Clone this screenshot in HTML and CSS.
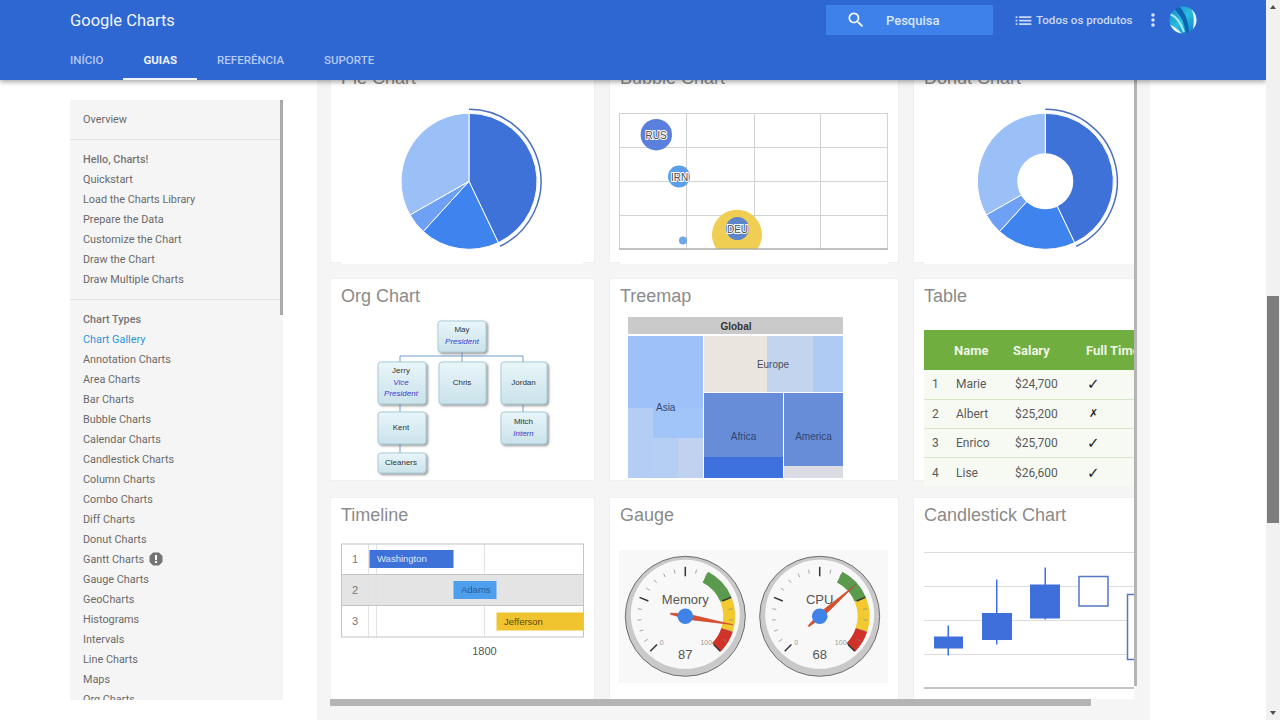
FILE: index.html
```html
<!DOCTYPE html>
<html lang="pt">
<head>
<meta charset="utf-8">
<title>Google Charts</title>
<link rel="stylesheet" href="styles.css">
</head>
<body>
<div class="page">
  <header class="topbar">
    <div class="topbar-row">
      <div class="brand">Google Charts</div>
      <div class="search">
        <svg class="search-icon" width="20" height="20" viewBox="0 0 24 24"><path fill="#fff" d="M15.5 14h-.79l-.28-.27A6.47 6.47 0 0 0 16 9.5 6.5 6.5 0 1 0 9.5 16c1.61 0 3.09-.59 4.23-1.57l.27.28v.79l5 4.99L20.49 19l-4.99-5zm-6 0C7.01 14 5 11.99 5 9.5S7.01 5 9.5 5 14 7.01 14 9.5 11.99 14 9.5 14z"/></svg>
        <span>Pesquisa</span>
      </div>
      <div class="products">
        <svg width="21" height="21" viewBox="0 0 24 24"><path fill="#c9d9f6" d="M3 13h2v-2H3v2zm0 4h2v-2H3v2zm0-8h2V7H3v2zm4 4h14v-2H7v2zm0 4h14v-2H7v2zM7 7v2h14V7H7z"/></svg>
        <span>Todos os produtos</span>
      </div>
      <svg class="kebab" width="6" height="16" viewBox="0 0 6 16"><circle cx="3" cy="3" r="1.8" fill="#d5e1f8"/><circle cx="3" cy="8" r="1.8" fill="#d5e1f8"/><circle cx="3" cy="13" r="1.8" fill="#d5e1f8"/></svg>
      <svg class="avatar" width="28" height="28" viewBox="0 0 28 28">
        <defs>
          <clipPath id="av"><circle cx="14" cy="14" r="13.5"/></clipPath>
          <linearGradient id="avg" x1="0" y1="0" x2="1" y2="1"><stop offset="0" stop-color="#1b7fd0"/><stop offset=".5" stop-color="#28bfe0"/><stop offset="1" stop-color="#0f6fc0"/></linearGradient>
        </defs>
        <g clip-path="url(#av)">
          <rect width="28" height="28" fill="url(#avg)"/>
          <path d="M0 18 C6 21 10 24 13 28 L0 28Z" fill="#eef8fb"/>
          <path d="M21 0 C25 7 26 15 23 28 L28 28 L28 0Z" fill="#e6f4f8"/>
          <path d="M10 0 C16 7 20 15 20 28 L17 28 C16 17 11 8 5 3Z" fill="#0d62b4"/>
          <path d="M1 8 C8 11 12 17 15 26" stroke="#a5e8f4" stroke-width="2" fill="none"/>
        </g>
      </svg>
    </div>
    <nav class="tabs">
      <a class="tab">INÍCIO</a>
      <a class="tab tab-active">GUIAS</a>
      <a class="tab">REFERÊNCIA</a>
      <a class="tab">SUPORTE</a>
    </nav>
  </header>

  <main class="layout">
    <aside class="sidenav">
      <div class="nav-thumb"></div>
      <ul class="nav-group">
        <li>Overview</li>
      </ul>
      <ul class="nav-group">
        <li class="nav-head">Hello, Charts!</li>
        <li>Quickstart</li>
        <li>Load the Charts Library</li>
        <li>Prepare the Data</li>
        <li>Customize the Chart</li>
        <li>Draw the Chart</li>
        <li>Draw Multiple Charts</li>
      </ul>
      <ul class="nav-group">
        <li class="nav-head">Chart Types</li>
        <li class="nav-active">Chart Gallery</li>
        <li>Annotation Charts</li>
        <li>Area Charts</li>
        <li>Bar Charts</li>
        <li>Bubble Charts</li>
        <li>Calendar Charts</li>
        <li>Candlestick Charts</li>
        <li>Column Charts</li>
        <li>Combo Charts</li>
        <li>Diff Charts</li>
        <li>Donut Charts</li>
        <li class="nav-badge"><span>Gantt Charts</span>
          <svg width="14" height="14" viewBox="0 0 14 14"><polygon points="4,0.5 10,0.5 13.5,4 13.5,10 10,13.5 4,13.5 0.5,10 0.5,4" fill="#757575"/><rect x="6" y="3" width="2" height="5" fill="#fff"/><rect x="6" y="9" width="2" height="2" fill="#fff"/></svg>
        </li>
        <li>Gauge Charts</li>
        <li>GeoCharts</li>
        <li>Histograms</li>
        <li>Intervals</li>
        <li>Line Charts</li>
        <li>Maps</li>
        <li>Org Charts</li>
      </ul>
    </aside>

    <section class="gutter">
      <div class="viewer">
        <div class="gallery">

          <article class="card">
            <h3 class="card-title">Pie Chart</h3>
            <svg class="chart chart-a" viewBox="331 100 263 163">
              <defs>
                <g id="pie" stroke="#fff" stroke-width="1">
                  <path fill="#3f72d9" d="M0 0L0 -68A68 68 0 0 1 29.3 61.4Z"/>
                  <path fill="#3f83ee" d="M0 0L29.3 61.4A68 68 0 0 1 -45.8 50.2Z"/>
                  <path fill="#6ea0f5" d="M0 0L-45.8 50.2A68 68 0 0 1 -59 33.6Z"/>
                  <path fill="#9bbff7" d="M0 0L-59 33.6A68 68 0 0 1 0 -68Z"/>
                  <path fill="none" stroke="#4a6fc0" stroke-width="1.5" d="M0 -72A72 72 0 0 1 31 65"/>
                </g>
              </defs>
              <rect x="342" y="258" width="241" height="6" fill="#fff"/>
              <use href="#pie" transform="translate(469 181.3)"/>
            </svg>
          </article>

          <article class="card">
            <h3 class="card-title">Bubble Chart</h3>
            <svg class="chart chart-b" viewBox="610 100 288 163">
              <rect x="620" y="258" width="268" height="6" fill="#fff"/>
              <g class="grid">
                <rect x="619.5" y="113.5" width="268" height="135.5" fill="#fff"/>
                <line x1="686.5" y1="113" x2="686.5" y2="249"/>
                <line x1="754.5" y1="113" x2="754.5" y2="249"/>
                <line x1="820.5" y1="113" x2="820.5" y2="249"/>
                <line x1="619" y1="147.5" x2="888" y2="147.5"/>
                <line x1="619" y1="181.5" x2="888" y2="181.5"/>
                <line x1="619" y1="215.5" x2="888" y2="215.5"/>
              </g>
              <circle cx="656.3" cy="134.7" r="15.7" fill="#5b7fdc"/>
              <circle cx="679" cy="176.5" r="11" fill="#5a9fe8"/>
              <circle cx="683" cy="240.5" r="4" fill="#6fa8e8"/>
              <path d="M716.5 249A25 25 0 1 1 757.5 249Z" fill="#f0ce54"/>
              <circle cx="737.5" cy="228.5" r="11.5" fill="#5d85cc"/>
              <line x1="619" y1="249" x2="888" y2="249" stroke="#999" stroke-width="1"/>
              <text class="bubble-label" x="656" y="138.5">RUS</text>
              <text class="bubble-label" x="679.5" y="180.5">IRN</text>
              <text class="bubble-label" x="737.5" y="232.5">DEU</text>
            </svg>
          </article>

          <article class="card">
            <h3 class="card-title">Donut Chart</h3>
            <svg class="chart chart-c" viewBox="914 100 240 163">
              <rect x="924" y="258" width="230" height="6" fill="#fff"/>
              <use href="#pie" transform="translate(1045.3 181.3)"/>
              <circle cx="1045.3" cy="181.3" r="28" fill="#fff"/>
            </svg>
          </article>

          <article class="card">
            <h3 class="card-title">Org Chart</h3>
            <svg class="chart chart-a" viewBox="331 318 263 163">
              <defs>
                <linearGradient id="node" x1="0" y1="0" x2="0" y2="1"><stop offset="0" stop-color="#e9f6fa"/><stop offset="1" stop-color="#cae2ea"/></linearGradient>
                <filter id="nodeShadow" x="-10%" y="-10%" width="125%" height="130%"><feDropShadow dx="1.5" dy="1.5" stdDeviation="0.8" flood-color="#666" flood-opacity=".7"/></filter>
              </defs>
              <g class="org-link">
                <path d="M400 362V356H523V362M462 352V362M400 404V412M400 444V453M523 404V412"/>
              </g>
              <g class="org-node">
                <rect x="438" y="321" width="48" height="31" rx="3"/>
                <rect x="378" y="362" width="48" height="42" rx="3"/>
                <rect x="439" y="362" width="47" height="42" rx="3"/>
                <rect x="501" y="362" width="46" height="42" rx="3"/>
                <rect x="378" y="412" width="48" height="32" rx="3"/>
                <rect x="501" y="412" width="46" height="32" rx="3"/>
                <rect x="378" y="453" width="48" height="20" rx="3"/>
              </g>
              <g class="org-text">
                <text x="462" y="332">May</text>
                <text class="org-role" x="462" y="344">President</text>
                <text x="401" y="373">Jerry</text>
                <text class="org-role" x="401" y="385">Vice</text>
                <text class="org-role" x="401" y="396">President</text>
                <text x="462" y="385">Chris</text>
                <text x="523.5" y="385">Jordan</text>
                <text x="401" y="430">Kent</text>
                <text x="523.5" y="424">Mitch</text>
                <text class="org-role" x="523.5" y="436">Intern</text>
                <text x="401" y="464.5">Cleaners</text>
              </g>
            </svg>
          </article>

          <article class="card">
            <h3 class="card-title">Treemap</h3>
            <svg class="chart chart-b" viewBox="610 318 288 163">
              <rect x="628" y="317" width="215" height="17" fill="#cacaca"/>
              <rect x="628" y="336" width="75" height="72" fill="#9dc1f8"/>
              <rect x="628" y="408" width="25" height="70" fill="#b3cdf5"/>
              <rect x="653" y="408" width="50" height="30" fill="#a1c5f9"/>
              <rect x="653" y="438" width="25" height="40" fill="#b4cef4"/>
              <rect x="678" y="438" width="25" height="40" fill="#c0d2f0"/>
              <rect x="704" y="336" width="63" height="56" fill="#ebe6dd"/>
              <rect x="767" y="336" width="46" height="56" fill="#c3d4ee"/>
              <rect x="813" y="336" width="30" height="56" fill="#b0cbf3"/>
              <rect x="704" y="393" width="79" height="64" fill="#678dd8"/>
              <rect x="704" y="457" width="79" height="21" fill="#3f71de"/>
              <rect x="784" y="393" width="59" height="73" fill="#678dd8"/>
              <rect x="784" y="466" width="59" height="12" fill="#dbdbe3"/>
              <text class="tm-head" x="736" y="329.5">Global</text>
              <text class="tm-dark" x="665.7" y="411">Asia</text>
              <text class="tm-grey" x="773" y="367.5">Europe</text>
              <text class="tm-dark" x="743.5" y="439.5">Africa</text>
              <text class="tm-dark" x="813.5" y="439.5">America</text>
            </svg>
          </article>

          <article class="card card-table">
            <h3 class="card-title">Table</h3>
            <table class="data">
              <thead>
                <tr><th class="col-n"></th><th class="col-name">Name</th><th class="col-sal">Salary</th><th>Full Time</th></tr>
              </thead>
              <tbody>
                <tr><td>1</td><td>Marie</td><td>$24,700</td><td class="mark">✓</td></tr>
                <tr><td>2</td><td>Albert</td><td>$25,200</td><td class="mark mark-no">✗</td></tr>
                <tr><td>3</td><td>Enrico</td><td>$25,700</td><td class="mark">✓</td></tr>
                <tr><td>4</td><td>Lise</td><td>$26,600</td><td class="mark">✓</td></tr>
              </tbody>
            </table>
          </article>

          <article class="card">
            <h3 class="card-title">Timeline</h3>
            <svg class="chart chart-a" viewBox="331 537 263 163">
              <rect x="342" y="544" width="241" height="93" fill="#fff"/>
              <rect x="342" y="574.5" width="241" height="31" fill="#e4e4e4"/>
              <g class="tl-grid">
                <line x1="368.5" y1="544" x2="368.5" y2="637"/>
                <line x1="376.5" y1="544" x2="376.5" y2="637"/>
                <line x1="484.5" y1="544" x2="484.5" y2="637"/>
              </g>
              <rect x="341.5" y="544" width="242" height="93" fill="none" stroke="#c4c4c4"/>
              <line x1="342" y1="574.5" x2="583" y2="574.5" stroke="#c4c4c4"/>
              <line x1="342" y1="605.5" x2="583" y2="605.5" stroke="#c4c4c4"/>
              <rect x="369.5" y="550" width="84" height="18" fill="#3f72d9"/>
              <rect x="453.5" y="581" width="43" height="18" fill="#4d9fee"/>
              <rect x="496.5" y="612.5" width="86.5" height="18" fill="#f0c42f"/>
              <text class="tl-num" x="355" y="563">1</text>
              <text class="tl-num" x="355" y="594">2</text>
              <text class="tl-num" x="355" y="625">3</text>
              <text class="tl-bar tl-white" x="377" y="561.5">Washington</text>
              <text class="tl-bar tl-blue" x="461" y="592.5">Adams</text>
              <text class="tl-bar tl-brown" x="504" y="624.5">Jefferson</text>
              <text class="tl-axis" x="484.5" y="654.5">1800</text>
            </svg>
          </article>

          <article class="card">
            <h3 class="card-title">Gauge</h3>
            <svg class="chart chart-b" viewBox="610 537 288 163">
              <defs>
                <g id="gaugeBase">
                  <circle r="60" fill="#c9c9c9" stroke="#6e6e6e" stroke-width="1"/>
                  <circle cy="-2" r="54.5" fill="#f8f8f8"/>
                  <g fill="none" stroke-width="12">
                    <path stroke="#5a9a4c" d="M20 -39.2A44 44 0 0 1 40.65 -16.8"/>
                    <path stroke="#f2c92e" d="M40.65 -16.8A44 44 0 0 1 41.8 13.6"/>
                    <path stroke="#cf3227" d="M41.8 13.6A44 44 0 0 1 31.1 31.1"/>
                  </g>
                  <g class="tick-minor">
                    <line y1="-48" y2="-44" transform="rotate(-121.5)"/><line y1="-48" y2="-44" transform="rotate(-108)"/>
                    <line y1="-48" y2="-44" transform="rotate(-94.5)"/><line y1="-48" y2="-44" transform="rotate(-81)"/>
                    <line y1="-48" y2="-44" transform="rotate(-54)"/><line y1="-48" y2="-44" transform="rotate(-40.5)"/>
                    <line y1="-48" y2="-44" transform="rotate(-27)"/><line y1="-48" y2="-44" transform="rotate(-13.5)"/>
                    <line y1="-48" y2="-44" transform="rotate(13.5)"/><line y1="-48" y2="-44" transform="rotate(27)"/>
                    <line y1="-48" y2="-44" transform="rotate(40.5)"/><line y1="-48" y2="-44" transform="rotate(54)"/>
                    <line y1="-48" y2="-44" transform="rotate(81)"/><line y1="-48" y2="-44" transform="rotate(94.5)"/>
                    <line y1="-48" y2="-44" transform="rotate(108)"/><line y1="-48" y2="-44" transform="rotate(121.5)"/>
                  </g>
                  <g class="tick-major">
                    <line y1="-49.5" y2="-40" transform="rotate(-135)"/><line y1="-49.5" y2="-40" transform="rotate(-67.5)"/>
                    <line y1="-49.5" y2="-40" transform="rotate(0)"/><line y1="-49.5" y2="-40" transform="rotate(67.5)"/>
                    <line y1="-49.5" y2="-40" transform="rotate(135)"/>
                  </g>
                  <text class="g-small" x="-23.5" y="28.5">0</text>
                  <text class="g-small" x="21" y="28.5">100</text>
                </g>
                <polygon id="needle" points="0,-48.5 2.6,-3 0.6,15 -0.6,15 -2.6,-3" fill="#d9502d" stroke="#c2402a" stroke-width=".5"/>
              </defs>
              <rect x="619" y="550" width="269" height="133" fill="#f8f8f8"/>
              <g transform="translate(685.3 616.3)">
                <use href="#gaugeBase"/>
                <text class="g-label" y="-12">Memory</text>
                <text class="g-value" y="42.5">87</text>
                <use href="#needle" transform="rotate(100)"/>
                <circle r="7.8" fill="#3f83e8"/>
              </g>
              <g transform="translate(819.7 616.3)">
                <use href="#gaugeBase"/>
                <text class="g-label" y="-12">CPU</text>
                <text class="g-value" y="42.5">68</text>
                <use href="#needle" transform="rotate(48.6)"/>
                <circle r="7.8" fill="#3f83e8"/>
              </g>
            </svg>
          </article>

          <article class="card">
            <h3 class="card-title">Candlestick Chart</h3>
            <svg class="chart chart-c" viewBox="914 537 240 163">
              <g class="cs-grid">
                <line x1="924" y1="552.5" x2="1154" y2="552.5"/>
                <line x1="924" y1="586.5" x2="1154" y2="586.5"/>
                <line x1="924" y1="620.5" x2="1154" y2="620.5"/>
                <line x1="924" y1="654.5" x2="1154" y2="654.5"/>
              </g>
              <line x1="924" y1="688" x2="1154" y2="688" stroke="#888"/>
              <g fill="#3f6fdb">
                <rect x="947.5" y="625.5" width="1.5" height="30"/>
                <rect x="934" y="636.5" width="29" height="12"/>
                <rect x="996" y="579.5" width="1.5" height="65"/>
                <rect x="982" y="613" width="30" height="27"/>
                <rect x="1044.5" y="567.5" width="1.5" height="52"/>
                <rect x="1030" y="584.5" width="30" height="34"/>
              </g>
              <g fill="#fff" stroke="#5577c4" stroke-width="1.5">
                <rect x="1079" y="576.5" width="29" height="29.5"/>
                <rect x="1127.5" y="594.5" width="30" height="65"/>
              </g>
            </svg>
          </article>

        </div>
        <div class="vbar"></div>
        <div class="hbar"></div>
      </div>
    </section>
  </main>
</div>
<div class="page-scroll">
  <svg class="arrow" width="14" height="14" viewBox="0 0 14 14"><polygon points="7,5 10,9 4,9" fill="#505050"/></svg>
  <div class="page-thumb"></div>
  <svg class="arrow" width="14" height="14" viewBox="0 0 14 14"><polygon points="4,5 10,5 7,9" fill="#505050"/></svg>
</div>
</body>
</html>
```

FILE: styles.css
```css
* { box-sizing: border-box; }
html, body { margin: 0; height: 720px; overflow: hidden; }
body { display: flex; background: #fff; font-family: Roboto, "Liberation Sans", sans-serif; }

.page { position: relative; width: 1266px; height: 720px; overflow: hidden; }

/* header */
.topbar {
  position: absolute; top: 0; left: 0; right: 0; z-index: 5;
  height: 80px; background: #2f67d2;
  box-shadow: 0 2px 5px rgba(0, 0, 0, .35);
}
.topbar-row { display: flex; align-items: center; height: 40px; padding-left: 70px; }
.brand { width: 756px; color: #f0f4fc; font-size: 16.5px; }
.search {
  display: flex; align-items: center; width: 167px; height: 30px; margin-right: 21px;
  padding-left: 20px; background: #3f81ea; color: #dbe7fb; font-size: 13px; font-weight: 500;
}
.search-icon { margin-right: 20px; }
.products { display: flex; align-items: center; width: 132px; color: #c9d9f6; font-size: 11.6px; font-weight: 500; margin-left: -1px; }
.products svg { margin-right: 2px; }
.kebab { margin-left: 5px; }
.avatar { margin-left: 13px; }
.tabs { display: flex; height: 40px; padding-left: 50px; }
.tab {
  display: flex; align-items: center; height: 40px; padding: 2px 20px;
  color: #b4c9f2; font-size: 11.5px; font-weight: 500;
}
.tab-active { color: #eef3fc; font-weight: 700; border-bottom: 2px solid #eef3fc; padding-bottom: 0; }

/* layout */
.layout { display: flex; height: 720px; padding-left: 70px; }

/* side navigation */
.sidenav {
  position: relative; flex: none; width: 213px; height: 600px; margin-top: 100px;
  overflow: hidden; background: #f5f5f5; color: #6a6a6a; font-size: 10.85px;
}
.nav-thumb { position: absolute; top: 0; right: 0; width: 3px; height: 215px; background: #aaa; }
.nav-group { margin: 0; padding: 10px 0 9px; list-style: none; border-bottom: 1px solid #e2e2e2; }
.nav-group li { height: 20px; padding-left: 13px; line-height: 19px; white-space: nowrap; }
.nav-group .nav-head { font-weight: 500; color: #757575; }
.nav-group .nav-active { color: #2a95dc; }
.nav-group .nav-badge { display: flex; align-items: flex-start; gap: 5px; }
.nav-badge svg { margin-top: 2px; }

/* gutter + gallery */
.gutter { flex: none; width: 833px; height: 720px; margin-left: 34px; padding: 60px 0 0 13px; background: #f5f5f5; }
.viewer { position: relative; width: 807px; }
.gallery {
  display: grid; width: 804px; height: 639px; overflow: hidden;
  grid-template-columns: 265px 290px 240px; column-gap: 14px;
  grid-template-rows: 203px 204px 202px; row-gap: 15px; align-items: start;
}
.card { height: 203px; background: #fff; border: 1px solid #f0f0f0; }
.card-title {
  margin: 0; height: 39px; padding: 7px 0 0 10px; color: #8b8b8b;
  font-family: "Liberation Sans", sans-serif; font-size: 18px; font-weight: 400; line-height: 20px;
}
.chart { display: block; overflow: visible; height: 163px; }
.chart-a { width: 263px; }
.chart-b { width: 288px; }
.chart-c { width: 240px; }
.vbar { position: absolute; top: 0; right: 0; width: 3px; height: 626px; background: #b4b4b4; }
.hbar { width: 761px; height: 7px; background: #b4b4b4; }

/* bubble */
.grid line { stroke: #d2d2d2; stroke-width: 1; }
.grid rect { stroke: #d2d2d2; stroke-width: 1; }
.bubble-label {
  font-family: "Liberation Sans", sans-serif; font-size: 10px; text-anchor: middle; fill: #4a4a4a;
  stroke: #fff; stroke-width: 2px; paint-order: stroke;
}

/* org */
.org-link path { fill: none; stroke: #6f9ccb; stroke-width: 1; }
.org-node rect { fill: url(#node); stroke: #a9ccd7; stroke-width: 1; filter: url(#nodeShadow); }
.org-text text { font-family: "Liberation Sans", sans-serif; font-size: 8px; text-anchor: middle; fill: #333; }
.org-text .org-role { font-style: italic; fill: #3a40d0; }

/* treemap */
.chart text { font-family: "Liberation Sans", sans-serif; }
.tm-head { font-size: 10px; font-weight: 700; fill: #333; text-anchor: middle; }
.tm-dark { font-size: 10px; fill: #2f4672; text-anchor: middle; }
.tm-grey { font-size: 10px; fill: #4a4f5a; text-anchor: middle; }

/* table */
.card-table { overflow: visible; }
.card-table .card-title { height: 28px; }
.data {
  width: 240px; margin: 23px 0 0 10px; border-collapse: collapse; table-layout: fixed;
  font-size: 12px; color: #5a5a5a; background: #f7faf3;
}
.data th { height: 40px; padding: 0; background: #6fae3f; color: #edf5e4; font-size: 13px; font-weight: 700; text-align: left; }
.data .col-n { width: 30px; }
.data .col-name { width: 59px; }
.data .col-sal { width: 73px; }
.data td { height: 29.3px; padding: 0 0 0 2px; border-bottom: 1px solid #d6e6c6; }
.data td:first-child { padding-left: 8px; }
.data .mark { font-family: "DejaVu Sans", sans-serif; color: #222; font-size: 15px; padding-left: 1px; }
.data .mark-no { font-size: 11px; padding-left: 3px; font-style: italic; }
.data tr:last-child td { border-bottom: 0; }

/* timeline */
.tl-grid line { stroke: #e2e2e2; }
.tl-num { font-size: 11px; fill: #777; text-anchor: middle; }
.tl-bar { font-size: 9.5px; }
.tl-white { fill: #dbe6fa; }
.tl-blue { fill: #255a94; }
.tl-brown { fill: #5c4a10; }
.tl-axis { font-size: 11px; fill: #555; text-anchor: middle; }

/* gauge */
.tick-minor line { stroke: #8a8a8a; stroke-width: .7; }
.tick-major line { stroke: #333; stroke-width: 1.5; }
.g-small { font-size: 7px; fill: #999; text-anchor: middle; }
.g-label { font-size: 13px; fill: #555; text-anchor: middle; }
.g-value { font-size: 13px; fill: #555; text-anchor: middle; }

/* candlestick */
.cs-grid line { stroke: #dcdcdc; }

/* page scrollbar */
.page-scroll { display: flex; flex-direction: column; width: 14px; height: 720px; background: #f1f1f1; }
.arrow { flex: none; display: block; }
.page-thumb { width: 12px; height: 227px; margin: 282px 0 183px 1px; background: #7d7d7d; }
```
